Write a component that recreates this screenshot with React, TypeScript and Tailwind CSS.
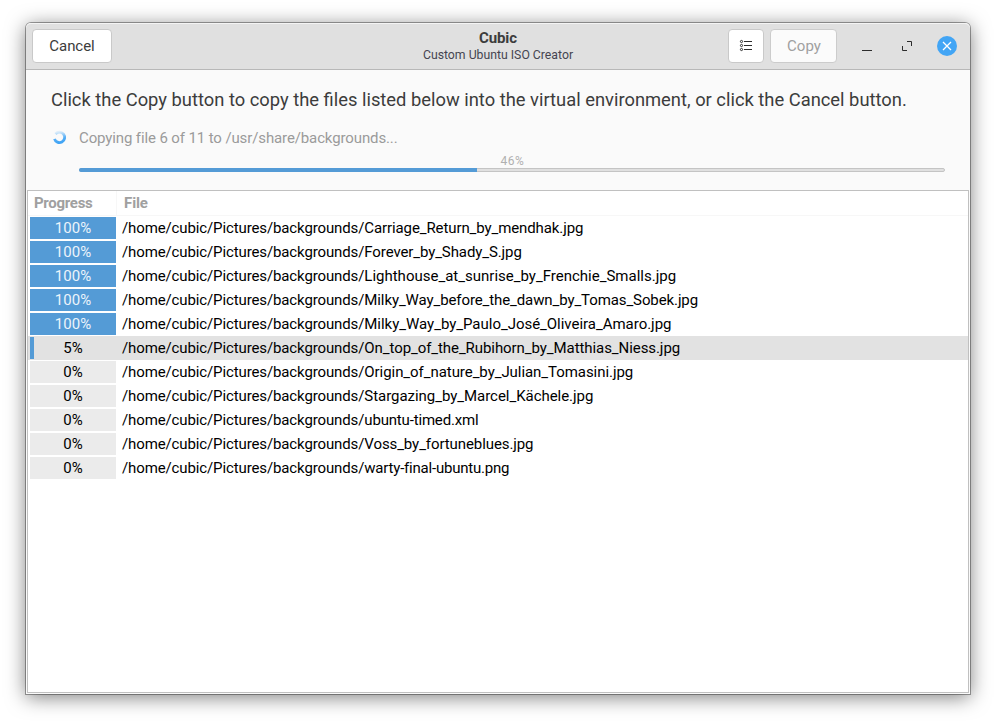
const files: [number, string, number][] = [
  [100, "Carriage_Return_by_mendhak.jpg", -0.1],
  [100, "Forever_by_Shady_S.jpg", -0.1],
  [100, "Lighthouse_at_sunrise_by_Frenchie_Smalls.jpg", 0],
  [100, "Milky_Way_before_the_dawn_by_Tomas_Sobek.jpg", -0.1],
  [100, "Milky_Way_by_Paulo_José_Oliveira_Amaro.jpg", -0.025],
  [5, "On_top_of_the_Rubihorn_by_Matthias_Niess.jpg", -0.07],
  [0, "Origin_of_nature_by_Julian_Tomasini.jpg", -0.055],
  [0, "Stargazing_by_Marcel_Kächele.jpg", -0.04],
  [0, "ubuntu-timed.xml", -0.17],
  [0, "Voss_by_fortuneblues.jpg", -0.09],
  [0, "warty-final-ubuntu.png", -0.21],
];

function Row({ value, name, spacing }: { value: number; name: string; spacing: number }) {
  const active = value > 0 && value < 100;
  return (
    <div className={`flex h-6 items-center pl-[2px] ${active ? "bg-[#e2e2e2]" : ""}`}>
      <div className={`relative h-[22px] w-[86px] ${active ? "bg-[#e2e2e2]" : "bg-[#ebebeb]"}`}>
        <div className="absolute inset-y-0 left-0 bg-[#549bd6]" style={{ width: `${value}%` }} />
        <div className={`relative text-center leading-[22px] ${value === 100 ? "text-[#ecf4fb]" : "text-black"}`}>{value}%</div>
      </div>
      <div className="ml-[6px] whitespace-nowrap">
        <span className="tracking-[-0.12px]">/home/cubic/Pictures/backgrounds/</span>
        <span style={{ letterSpacing: `${spacing}px` }}>{name}</span>
      </div>
    </div>
  );
}

export default function App() {
  return (
    <div className="h-[723px] w-[996px] overflow-hidden bg-white pt-[23px] pl-[26px] font-['Roboto',sans-serif] text-[15px] text-black">
      <div className="flex h-[671px] w-[944px] flex-col rounded-t-[5px] bg-[#fafafa] shadow-[0_0_0_1px_rgba(0,0,0,0.35),0_3px_20px_rgba(0,0,0,0.52)]">
        <header className="flex h-[47px] shrink-0 rounded-t-[5px] border-b border-[#b8b8b8] bg-[#e0e0e0] pt-[6px] pl-[6px] shadow-[inset_0_1px_0_#f4f4f4]">
          <button className="h-[34px] w-[80px] rounded-[4px] border border-[#c9c9c9] bg-white tracking-[-0.05px] text-[#3c3c3c]">Cancel</button>
          <div className="ml-[286px] w-[200px] text-center text-[#3c3c3c]">
            <div className="text-[15px] leading-[18px] font-bold tracking-[-0.1px]">Cubic</div>
            <div className="pt-px text-[12.25px] leading-[15px] text-[#454550]">Custom Ubuntu ISO Creator</div>
          </div>
          <button className="ml-[130px] flex h-[34px] w-[36px] items-center justify-center rounded-[4px] border border-[#c9c9c9] bg-white">
            <svg width="16" height="16" fill="none" stroke="#2c2c2c">
              <path d="M6 3.500h8M6 7.500h8M6 11.500h8" />
              <circle cx="3.500" cy="3.500" r="1.100" />
              <circle cx="3.500" cy="7.500" r="1.100" />
              <circle cx="3.500" cy="11.500" r="1.100" />
            </svg>
          </button>
          <button className="ml-[6px] h-[34px] w-[67px] rounded-[4px] border border-[#cccccc] bg-[#fbfbfb] pl-px text-[#a0a0a0]">Copy</button>
          <svg className="ml-[22px]" width="100" height="34" fill="none" stroke="#2c2c2c">
            <path d="M3 21.500h10M48 12.500h4.500v4.500M43.500 17v4.500H48" />
            <circle cx="88" cy="17" r="10" fill="#42a5f5" stroke="none" />
            <path d="M84 13l8 8M92 13l-8 8" stroke="white" strokeWidth="1.300" />
          </svg>
        </header>
        <section className="h-[120px] shrink-0 px-[25px]">
          <h1 className="pt-[18px] text-[18.35px] leading-6 whitespace-nowrap text-[#3c3c3c]">Click the Copy button to copy the files listed below into the virtual environment, or click the Cancel button.</h1>
          <div className="mt-4 flex h-5 items-center tracking-[-0.12px] text-[#9b9b9b]">
            <svg className="mr-[12px]" width="16" height="16" fill="none">
              <defs>
                <linearGradient id="spin" x1="0.4" y1="1" x2="0.2" y2="0">
                  <stop offset="0" stopColor="#42a5f5" />
                  <stop offset="0.35" stopColor="#42a5f5" stopOpacity="0.9" />
                  <stop offset="1" stopColor="#42a5f5" stopOpacity="0.15" />
                </linearGradient>
              </defs>
              <path d="M4.500 4A5.200 5.200 0 1 1 3.500 8.800" stroke="url(#spin)" strokeWidth="2.800" />
            </svg>
            Copying file 6 of 11 to /usr/share/backgrounds...
          </div>
          <div className="ml-7 h-5 pt-[6px] pl-px text-center text-[12px] leading-[15px] tracking-[0.5px] text-[#b0b0b0]">46%</div>
          <div className="relative ml-7 h-1 rounded-[2px] border border-[#c4c4c4] bg-[#e0e0e0]"><div className="-mt-px -ml-px h-1 w-[46.1%] rounded-l-[2px] bg-[#549bd6]" /></div>
        </section>
        <main className="mx-px mb-px flex-1 border border-[#c0c0c0] bg-white">
          <div className="flex h-[25px] items-stretch border-b border-[#f7f7f7] leading-6 font-bold text-[#a0a0a0]">
            <div className="w-[89px] border-r border-[#f7f7f7] pl-[6px] tracking-[-0.3px]">Progress</div>
            <div className="pl-[7px] tracking-[-0.1px]">File</div>
          </div>
          {files.map(([value, name, spacing]) => <Row key={name} value={value} name={name} spacing={spacing} />)}
        </main>
      </div>
    </div>
  );
}
